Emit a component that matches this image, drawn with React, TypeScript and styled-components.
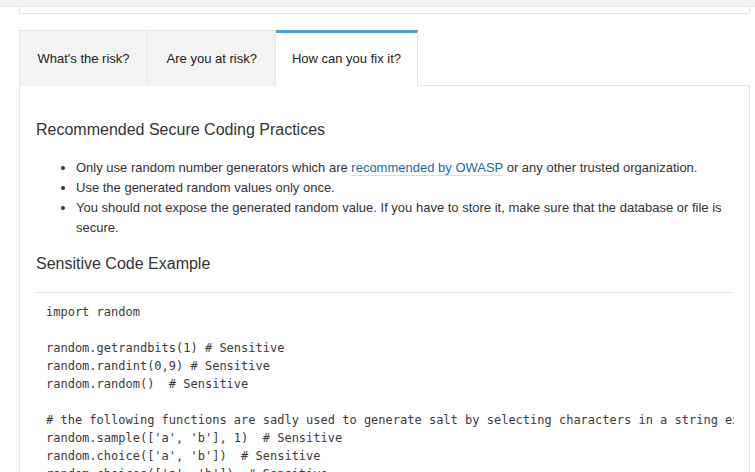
import React from "react";
import styled, { createGlobalStyle } from "styled-components";

const Global = createGlobalStyle`
  html, body { margin: 0; padding: 0; background: #fff; overflow: hidden; }
  body { font-family: "Liberation Sans", Arial, sans-serif; color: #333; font-size: 13px; }
`;

const Page = styled.div`
  height: 472px;
  overflow: hidden;
`;

const TopBand = styled.div`
  height: 6px;
  background: #f3f3f3;
  border-bottom: 1px solid #e6e6e6;
`;

const Column = styled.div`
  margin: 0 5px 0 19px;
`;

const PrevCard = styled.div`
  height: 6px;
  border: 1px solid #e6e6e6;
  border-top: none;
  background: #fff;
`;

const TabBar = styled.div`
  display: flex;
  margin-top: 16px;
`;

const Tab = styled.div<{ $active?: boolean; $pad: number }>`
  box-sizing: border-box;
  height: 56px;
  display: flex;
  align-items: center;
  padding: 0 ${(p) => p.$pad}px;
  font-size: 13px;
  color: #222;
  background: ${(p) => (p.$active ? "#fff" : "#f3f3f3")};
  border: 1px solid #e6e6e6;
  border-bottom: none;
  ${(p) => (p.$active ? "border-top: 3px solid #4b9fd5; padding-bottom: 2px;" : "")}
  & + & {
    border-left: none;
  }
`;

const TabFill = styled.div`
  flex: 1;
  border-bottom: 1px solid #e6e6e6;
`;

const Panel = styled.div`
  border: 1px solid #e6e6e6;
  border-top: none;
  padding: 32px 15px 0 16px;
  height: 600px;
`;

const Heading = styled.h2<{ $top?: number }>`
  margin: ${(p) => p.$top ?? 0}px 0 0;
  font-size: 16px;
  font-weight: 400;
  line-height: 24px;
  color: #333;
`;

const List = styled.ul`
  margin: 16px 0 0;
  padding-left: 40px;
  list-style: disc;
`;

const Item = styled.li`
  font-size: 13px;
  line-height: 20px;
  color: #333;
`;

const Link = styled.a`
  color: #236a97;
  text-decoration: none;
  border-bottom: 1px solid #cae3f2;
`;

const Code = styled.pre`
  margin: 16px 0 0;
  padding: 10px 10px;
  border-top: 1px solid #e6e6e6;
  font-family: "DejaVu Sans Mono", monospace;
  font-size: 12px;
  line-height: 18px;
  color: #3a3a3a;
  overflow: hidden;
  white-space: pre;
`;

const code = `import random

random.getrandbits(1) # Sensitive
random.randint(0,9) # Sensitive
random.random()  # Sensitive

# the following functions are sadly used to generate salt by selecting characters in a string ex: "abcdefghijk...XYZ0123456789"
random.sample(['a', 'b'], 1)  # Sensitive
random.choice(['a', 'b'])  # Sensitive
random.choices(['a', 'b'])  # Sensitive`;

export default function App() {
  return (
    <Page>
      <Global />
      <TopBand />
      <Column>
        <PrevCard />
        <TabBar>
          <Tab $pad={17.5}>What's the risk?</Tab>
          <Tab $pad={18.5}>Are you at risk?</Tab>
          <Tab $pad={15.5} $active>
            How can you fix it?
          </Tab>
          <TabFill />
        </TabBar>
        <Panel>
          <Heading>Recommended Secure Coding Practices</Heading>
          <List>
            <Item>
              Only use random number generators which are{" "}
              <Link href="#">recommended by OWASP</Link> or any other trusted organization.
            </Item>
            <Item>Use the generated random values only once.</Item>
            <Item>
              You should not expose the generated random value. If you have to store it, make sure that the
              database or file is secure.
            </Item>
          </List>
          <Heading $top={14}>Sensitive Code Example</Heading>
          <Code>{code}</Code>
        </Panel>
      </Column>
    </Page>
  );
}
